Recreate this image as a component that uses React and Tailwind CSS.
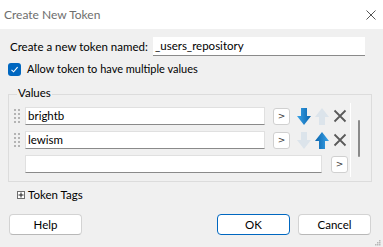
import React from 'react';

const font = "font-['Lato',sans-serif]";

const Grip = () => (
    <div className="grid grid-cols-2 gap-x-[2px] gap-y-[2px] w-[6px] mr-[5px]">
        {[0, 1, 2, 3, 4, 5, 6, 7].map(i => (
            <div key={i} className="w-[2px] h-[2px] bg-[#b4b4b4]" />
        ))}
    </div>
);

const Arrow = ({ dir, active }) => (
    <svg width="14" height="17" viewBox="0 0 14 17" className={dir === 'up' ? 'rotate-180' : ''}>
        <defs>
            <linearGradient id="arrowBlue" x1="0" y1="0" x2="1" y2="0">
                <stop offset="0" stopColor="#3aa3e8" />
                <stop offset="1" stopColor="#0a64ad" />
            </linearGradient>
        </defs>
        <polygon
            points="4,0 10,0 10,8 14,8 7,17 0,8 4,8"
            fill={active ? 'url(#arrowBlue)' : '#dce4eb'}
        />
    </svg>
);

const Cross = () => (
    <svg width="14" height="14" viewBox="0 0 14 14">
        <path d="M1.5 1.5 L12.5 12.5 M12.5 1.5 L1.5 12.5" stroke="#5a5a5a" strokeWidth="1.8" />
    </svg>
);

const SmallBtn = () => (
    <button className="w-[17px] h-[17px] bg-white border border-[#d0d0d0] rounded-[3px] flex items-center justify-center text-[9px] leading-none text-[#3a3a3a] font-['DejaVu_Sans',sans-serif]">
        &gt;
    </button>
);

const ValueRow = ({ value, down, up }) => (
    <div className="flex items-center h-[18px]">
        <Grip />
        <div className="w-[240px] h-[18px] bg-white border border-[#e0e0e0] border-b-[#8a8a8a] pl-[2px] flex items-center text-[11.5px] text-black">
            {value}
        </div>
        <div className="ml-[8px]"><SmallBtn /></div>
        <div className="ml-[7px] flex items-center gap-[4px]">
            <Arrow dir="down" active={down} />
            <Arrow dir="up" active={up} />
            <Cross />
        </div>
    </div>
);

const DialogButton = ({ label, primary }) => (
    <button className={`w-[73px] h-[21px] bg-white rounded-[4px] border text-[11.5px] text-black flex items-center justify-center ${primary ? 'border-[#0067c0]' : 'border-[#d3d3d3] border-b-[#b8b8b8]'}`}>
        {label}
    </button>
);

export default function App() {
    return (
        <div className={`w-[383px] h-[247px] bg-[#f0f0f0] flex flex-col relative overflow-hidden ${font}`}>
            {/* Title bar */}
            <div className="h-[29px] bg-white flex items-center justify-between pl-[4px] pr-[7px] shrink-0">
                <span className="text-[12px] text-[#6e6e6e]">Create New Token</span>
                <svg width="10" height="10" viewBox="0 0 10 10">
                    <path d="M0.5 0.5 L9.5 9.5 M9.5 0.5 L0.5 9.5" stroke="#555" strokeWidth="1" />
                </svg>
            </div>

            {/* Name */}
            <div className="flex items-center mt-[8px] pl-[10px] h-[19px]">
                <span className="w-[143px] whitespace-nowrap text-[11.5px] text-black">Create a new token named:</span>
                <div className="w-[212px] h-[19px] bg-white border-b border-[#8a8a8a] pl-[2px] flex items-center text-[11.5px] text-black">
                    _users_repository
                </div>
            </div>

            {/* Multiple values */}
            <div className="flex items-center mt-[6px] pl-[8px] h-[14px]">
                <div className="w-[13px] h-[13px] rounded-[3px] bg-[#0067c0] flex items-center justify-center">
                    <svg width="9" height="9" viewBox="0 0 9 9">
                        <path d="M1.5 4.8 L3.6 6.8 L7.6 2.2" stroke="white" strokeWidth="1.1" fill="none" />
                    </svg>
                </div>
                <span className="ml-[6px] whitespace-nowrap text-[11px] text-black">Allow token to have multiple values</span>
            </div>

            {/* Values group */}
            <div className="relative mt-[18px] ml-[8px] w-[364px] h-[88px] border border-[#dcdcdc]">
                <span className="absolute -top-[10px] left-[8px] px-[1px] bg-[#f0f0f0] text-[11.5px] text-black leading-[16px]">Values</span>
                <div className="flex">
                    <div className="flex flex-col gap-[6px] pt-[12px] pl-[5px]">
                        <ValueRow value="brightb" down />
                        <ValueRow value="lewism" up />
                        <div className="flex items-center h-[18px]">
                            <div className="w-[11px]" />
                            <div className="w-[297px] h-[18px] bg-white border border-[#e0e0e0] border-b-[#8a8a8a]" />
                            <div className="ml-[9px]"><SmallBtn /></div>
                        </div>
                    </div>
                    <div className="ml-[2px] mt-[8px] w-[1px] h-[74px] bg-white" />
                    <div className="ml-[7px] mt-[25px] w-[2px] h-[37px] rounded-full bg-[#8a8a8a]" />
                </div>
            </div>

            {/* Token tags */}
            <div className="flex items-center mt-[5px] pl-[17px] h-[16px]">
                <div className="w-[8px] h-[8px] border border-[#6e6e6e] bg-white relative flex items-center justify-center">
                    <svg width="6" height="6" viewBox="0 0 6 6">
                        <path d="M0.5 3 H5.5 M3 0.5 V5.5" stroke="#222" strokeWidth="1" />
                    </svg>
                </div>
                <span className="ml-[3px] text-[11.5px] text-black">Token Tags</span>
            </div>

            {/* Buttons */}
            <div className="flex items-center mt-[11px] pl-[9px] pr-[12px]">
                <DialogButton label="Help" />
                <div className="ml-auto flex gap-[8px]">
                    <DialogButton label="OK" primary />
                    <DialogButton label="Cancel" />
                </div>
            </div>

            {/* Resize grip */}
            <svg width="6" height="6" viewBox="0 0 6 6" className="absolute right-[2px] bottom-[1px]">
                <rect x="4" y="0" width="1.5" height="1.5" fill="#b8b8b8" />
                <rect x="2" y="2" width="1.5" height="1.5" fill="#b8b8b8" />
                <rect x="4" y="2" width="1.5" height="1.5" fill="#b8b8b8" />
                <rect x="0" y="4" width="1.5" height="1.5" fill="#b8b8b8" />
                <rect x="2" y="4" width="1.5" height="1.5" fill="#b8b8b8" />
                <rect x="4" y="4" width="1.5" height="1.5" fill="#b8b8b8" />
            </svg>
        </div>
    );
}
